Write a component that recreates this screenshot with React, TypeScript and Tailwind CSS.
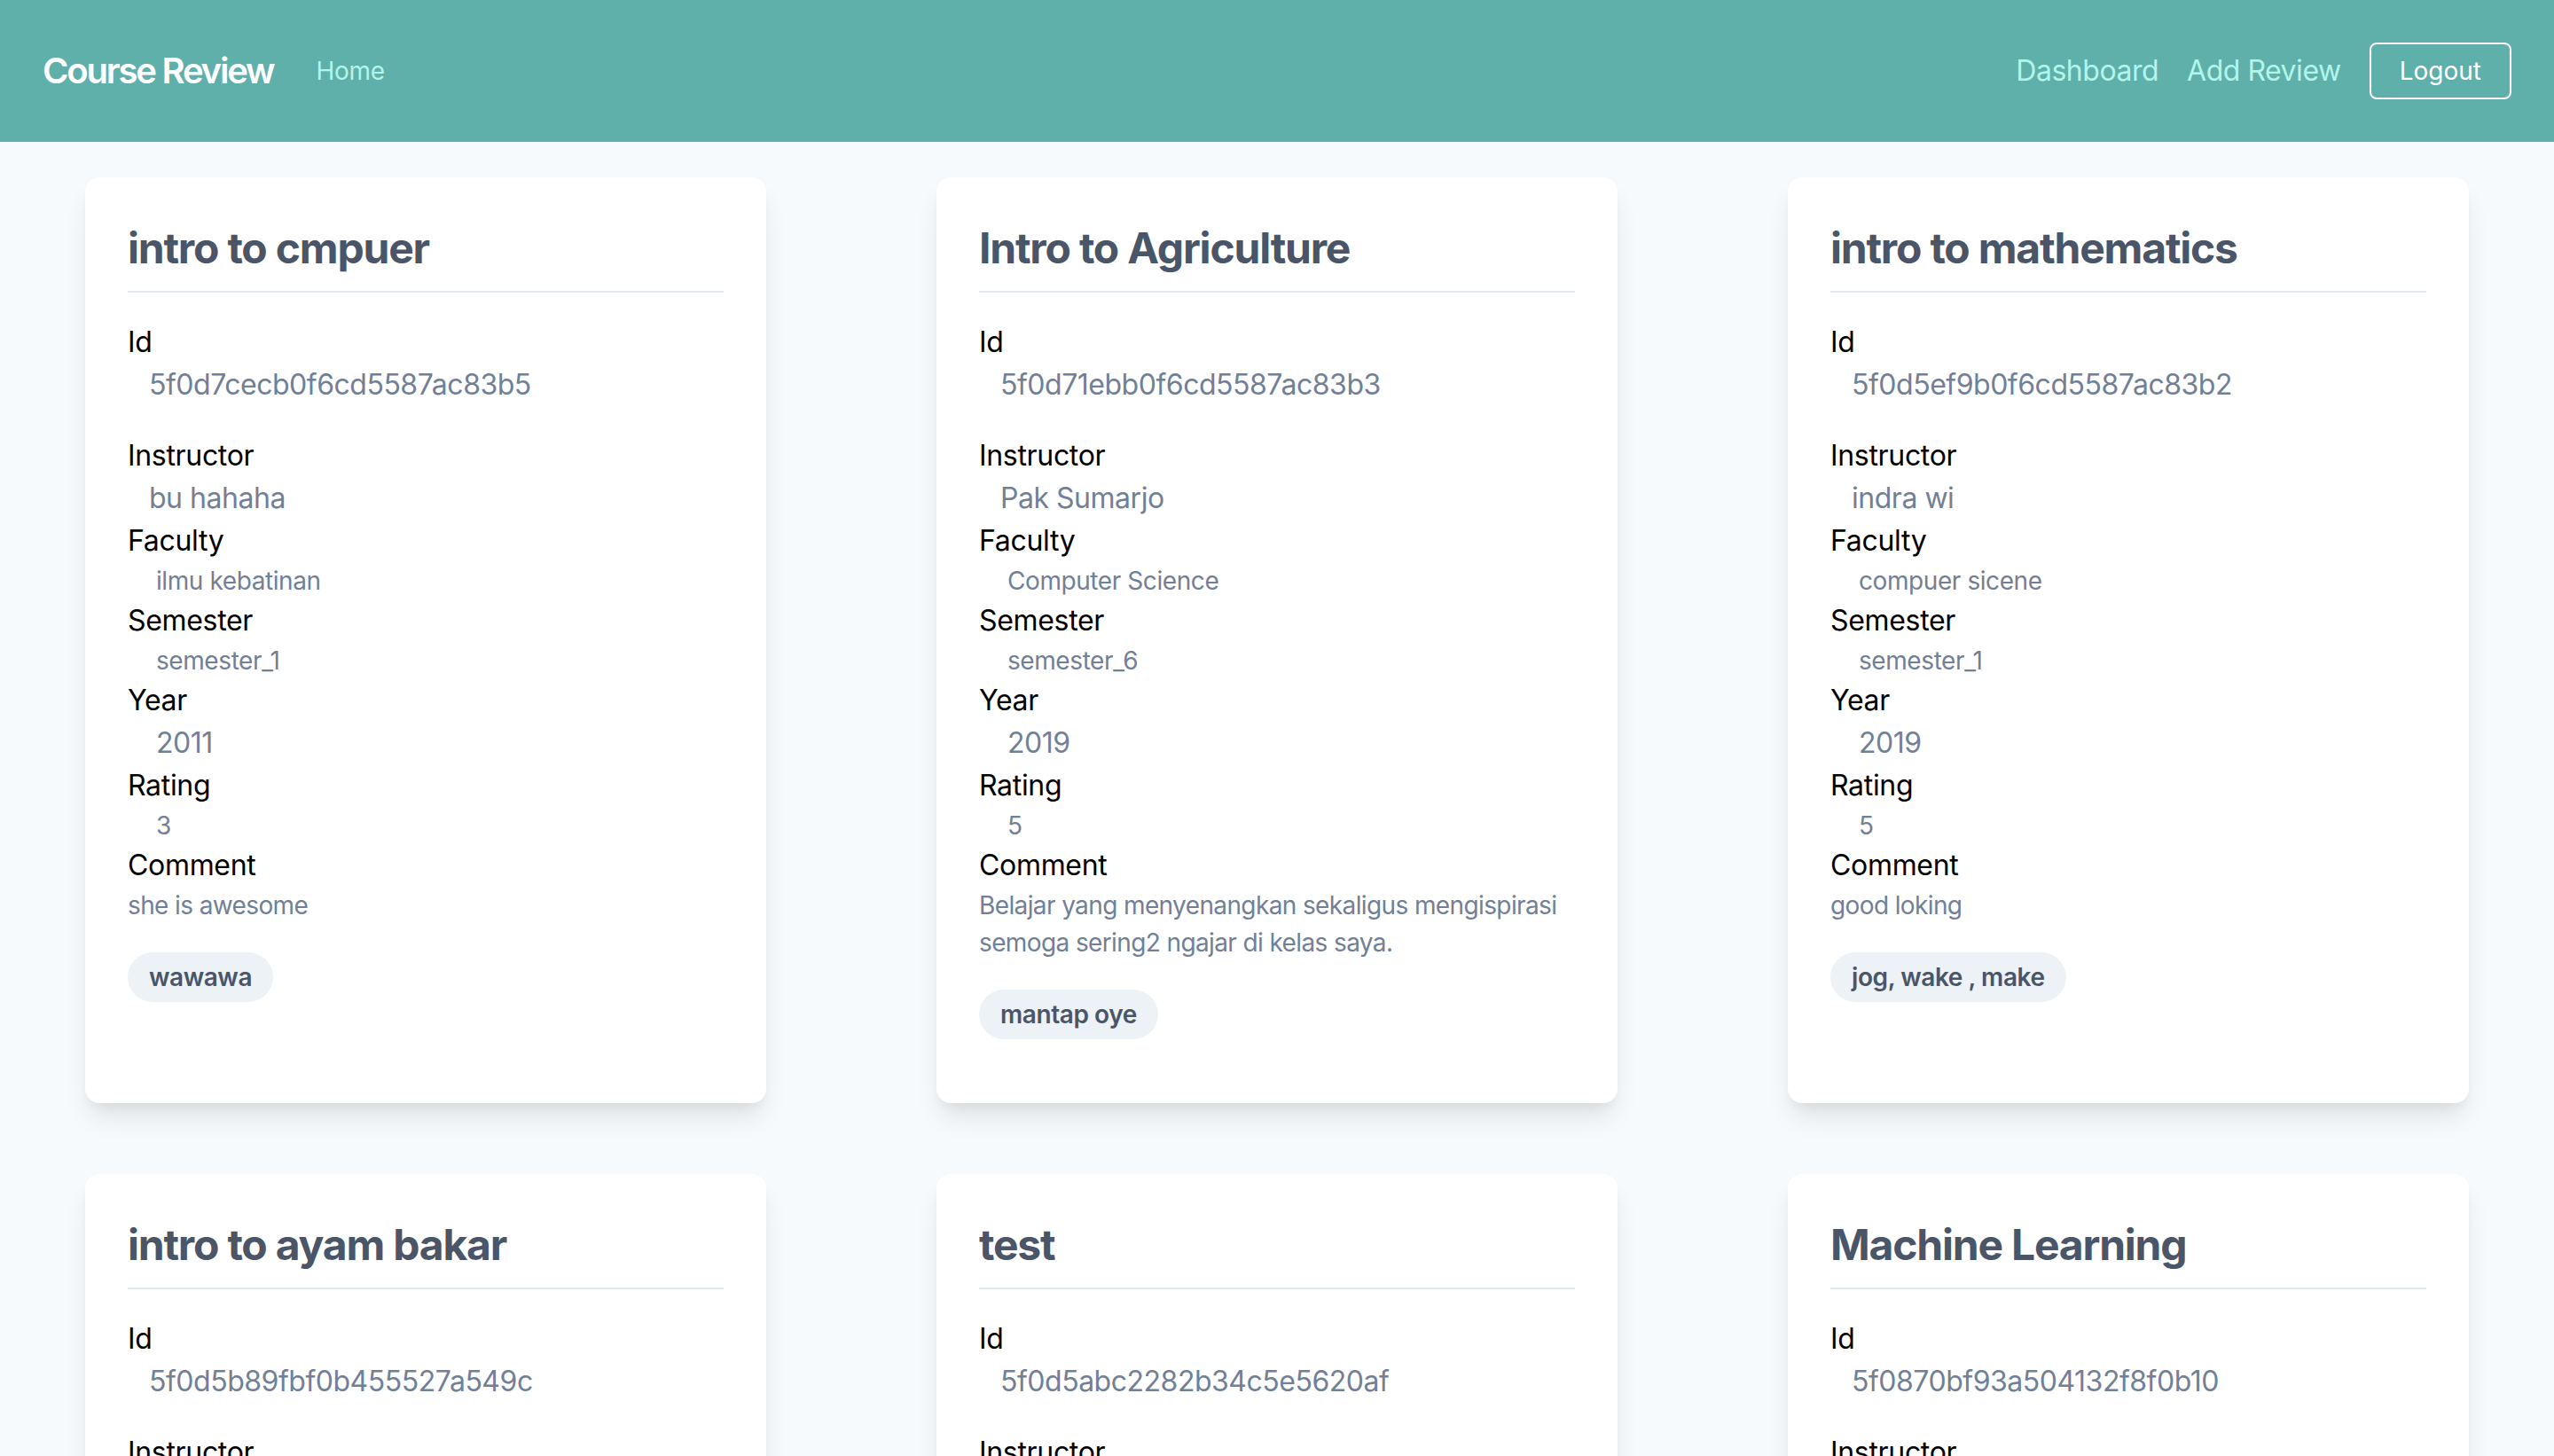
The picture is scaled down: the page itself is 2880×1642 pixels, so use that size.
import React from "react";

type Review = {
  title: string;
  id: string;
  instructor: string;
  faculty: string;
  semester: string;
  year: string;
  rating: string;
  comment: string;
  tags: string[];
};

const reviews: Review[] = [
  {
    title: "intro to cmpuer",
    id: "5f0d7cecb0f6cd5587ac83b5",
    instructor: "bu hahaha",
    faculty: "ilmu kebatinan",
    semester: "semester_1",
    year: "2011",
    rating: "3",
    comment: "she is awesome",
    tags: ["wawawa"],
  },
  {
    title: "Intro to Agriculture",
    id: "5f0d71ebb0f6cd5587ac83b3",
    instructor: "Pak Sumarjo",
    faculty: "Computer Science",
    semester: "semester_6",
    year: "2019",
    rating: "5",
    comment:
      "Belajar yang menyenangkan sekaligus mengispirasi semoga sering2 ngajar di kelas saya.",
    tags: ["mantap oye"],
  },
  {
    title: "intro to mathematics",
    id: "5f0d5ef9b0f6cd5587ac83b2",
    instructor: "indra wi",
    faculty: "compuer sicene",
    semester: "semester_1",
    year: "2019",
    rating: "5",
    comment: "good loking",
    tags: ["jog, wake , make"],
  },
  {
    title: "intro to ayam bakar",
    id: "5f0d5b89fbf0b455527a549c",
    instructor: "pak budi",
    faculty: "tata boga",
    semester: "semester_2",
    year: "2020",
    rating: "4",
    comment: "enak sekali",
    tags: ["ayam"],
  },
  {
    title: "test",
    id: "5f0d5abc2282b34c5e5620af",
    instructor: "test",
    faculty: "test",
    semester: "semester_1",
    year: "2020",
    rating: "1",
    comment: "test",
    tags: ["test"],
  },
  {
    title: "Machine Learning",
    id: "5f0870bf93a504132f8f0b10",
    instructor: "Pak Andi",
    faculty: "Computer Science",
    semester: "semester_5",
    year: "2020",
    rating: "5",
    comment: "seru banget",
    tags: ["ai, data"],
  },
];

function Label({ children }: { children: React.ReactNode }) {
  return (
    <div className="text-[32px] leading-[48px] tracking-[-0.01em] text-black">{children}</div>
  );
}

function ReviewCard({ review }: { review: Review }) {
  return (
    <div className="rounded-[16px] bg-white p-[48px] pb-[72px] shadow-[0_20px_30px_-6px_rgba(0,0,0,0.1),0_8px_12px_-4px_rgba(0,0,0,0.05)]">
      <h2 className="border-b-2 border-[#e2e8f0] pb-[16px] text-[48px] font-bold leading-[64px] tracking-[-0.025em] text-[#4a5568]">
        {review.title}
      </h2>

      <div className="mt-[32px] mb-[32px]">
        <Label>Id</Label>
        <div className="pl-[24px] text-[32px] leading-[48px] tracking-[-0.015em] text-[#718096]">
          {review.id}
        </div>
      </div>

      <Label>Instructor</Label>
      <div className="pl-[24px] text-[32px] leading-[48px] tracking-[-0.015em] text-[#718096]">
        {review.instructor}
      </div>

      <Label>Faculty</Label>
      <div className="pl-[32px] text-[28px] leading-[42px] tracking-[-0.015em] text-[#718096]">
        {review.faculty}
      </div>

      <Label>Semester</Label>
      <div className="pl-[32px] text-[28px] leading-[42px] tracking-[-0.015em] text-[#718096]">
        {review.semester}
      </div>

      <Label>Year</Label>
      <div className="pl-[32px] text-[32px] leading-[48px] tracking-[-0.015em] text-[#718096]">
        {review.year}
      </div>

      <Label>Rating</Label>
      <div className="pl-[32px] text-[28px] leading-[42px] tracking-[-0.015em] text-[#718096]">
        {review.rating}
      </div>

      <Label>Comment</Label>
      <p className="text-[28px] leading-[42px] tracking-[-0.022em] text-[#718096]">{review.comment}</p>

      <div className="mt-[32px] flex flex-wrap gap-[16px]">
        {review.tags.map((t) => (
          <span
            key={t}
            className="rounded-full bg-[#edf2f7] px-[24px] py-[8px] text-[28px] font-semibold leading-[40px] tracking-[-0.015em] text-[#4a5568]"
          >
            {t}
          </span>
        ))}
      </div>
    </div>
  );
}

export default function App() {
  return (
    <div className="min-h-screen bg-[#f7fafc] [font-family:Inter,'Noto_Sans',sans-serif]">
      <nav className="flex items-center justify-between bg-[#5fafab] p-[48px]">
        <div className="flex items-center">
          <span className="mr-[48px] text-[40px] font-semibold leading-[60px] tracking-[-0.055em] text-white">
            Course Review
          </span>
          <a href="#" className="text-[28px] leading-[42px] tracking-[-0.01em] text-[#b2f5ea]">
            Home
          </a>
        </div>
        <div className="flex items-center">
          <a href="#" className="mr-[32px] text-[32px] leading-[48px] tracking-[-0.015em] text-[#b2f5ea]">
            Dashboard
          </a>
          <a href="#" className="mr-[32px] text-[32px] leading-[48px] tracking-[-0.015em] text-[#b2f5ea]">
            Add Review
          </a>
          <button className="rounded-[8px] border-2 border-white px-[32px] py-[16px] text-[28px] leading-none text-white">
            Logout
          </button>
        </div>
      </nav>

      <main className="grid grid-cols-3 gap-x-[192px] gap-y-[80px] px-[96px] py-[40px]">
        {reviews.map((r) => (
          <ReviewCard key={r.id} review={r} />
        ))}
      </main>
    </div>
  );
}
